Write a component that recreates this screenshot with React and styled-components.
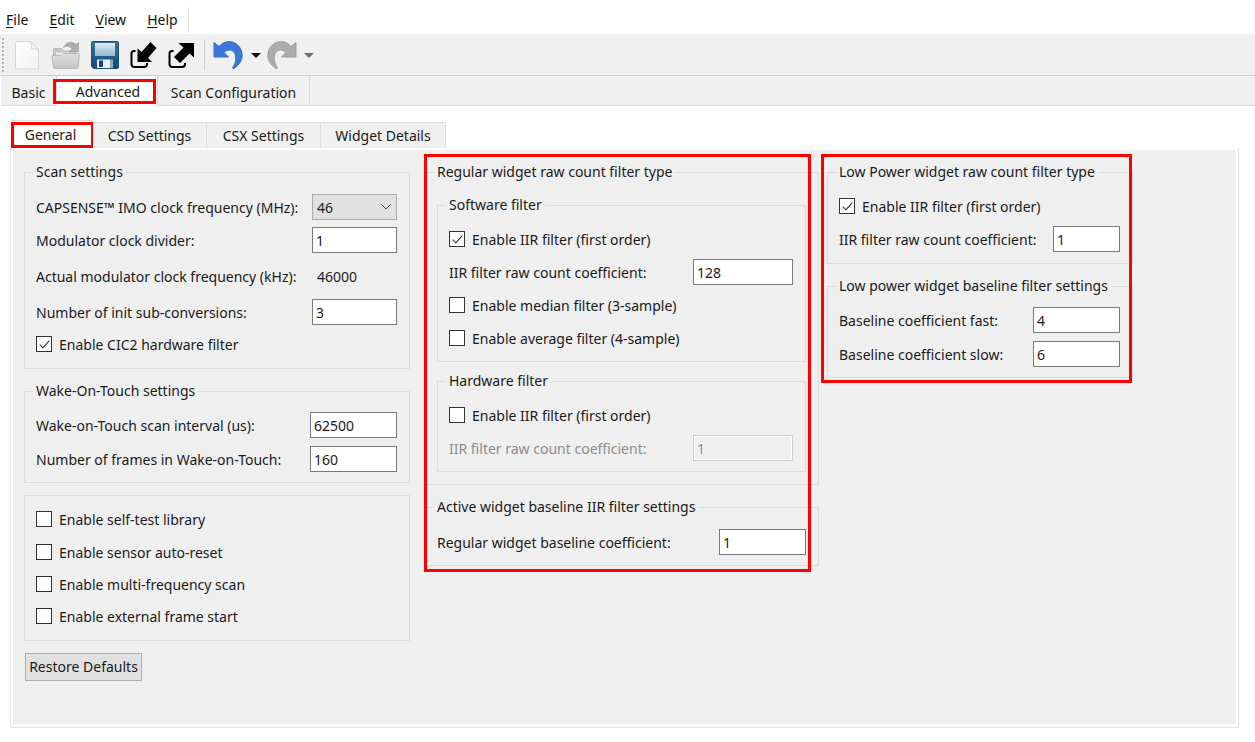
import React from "react";
import styled, { createGlobalStyle, css } from "styled-components";

const Global = createGlobalStyle`
  *, *::before, *::after { box-sizing: border-box; }
  body { margin: 0; background: #fff; }
  body, button, input, select {
    font-family: "Noto Sans", "Open Sans", sans-serif;
    font-size: 14px;
    line-height: 20px;
    color: #1a1a1a;
  }
`;

const Window = styled.div`
  min-height: 100vh;
  display: flex;
  flex-direction: column;
`;

const MenuBar = styled.nav`
  display: flex;
  align-items: center;
  align-self: flex-start;
  height: 26px;
  margin-top: 7px;
  padding-left: 6px;
  gap: 21px;
  padding-right: 10px;
  border-right: 1px solid #e8e8e8;
`;

const MenuItem = styled.button`
  border: 0;
  padding: 0;
  background: none;
  color: #111;
  u { text-underline-offset: 2px; }
`;

const ToolBar = styled.div`
  display: flex;
  align-items: center;
  height: 42px;
  margin-top: 1px;
  padding-left: 2px;
  background: #f0f0f0;
  border-bottom: 1px solid #cfcfcf;
`;

const Grip = styled.span`
  height: 34px;
  margin-right: 10px;
  border-left: 2px dotted #b4b4b4;
`;

const ToolButton = styled.button`
  display: flex;
  padding: 0;
  border: 0;
  background: none;
  margin-right: ${(p) => p.$gap || 8}px;
  svg { display: block; }
`;

const ToolSeparator = styled.span`
  height: 30px;
  margin-right: 8px;
  border-left: 1px solid #d0d0d0;
`;

const redFrame = css`
  content: "";
  position: absolute;
  border: 3px solid #fe0000;
  pointer-events: none;
`;

const MainTabs = styled.div`
  display: flex;
  height: 30px;
  margin-left: 1px;
  background: #f0f0f0;
  border-bottom: 1px solid #dcdcdc;
`;

const MainTab = styled.button`
  position: relative;
  width: ${(p) => p.$width}px;
  height: ${(p) => (p.$active ? 30 : 29)}px;
  padding: 4px 0 0;
  border: 0;
  border-right: 1px solid #dadada;
  background: ${(p) => (p.$active ? "#fff" : "transparent")};
  ${(p) =>
    p.$active &&
    css`
      padding: 2px 0 0 2px;
      &::after { ${redFrame} inset: 3px 1px 2px -4px; }
    `}
`;

const SubTabs = styled.div`
  display: flex;
  align-items: flex-end;
  height: 28px;
  margin: 14px 0 0 11px;
`;

const SubTab = styled.button`
  position: relative;
  width: ${(p) => p.$width}px;
  height: 26px;
  padding: 1px 0 0;
  border: solid #dedede;
  border-width: 1px 1px 0 0;
  background: #f0f0f0;
  ${(p) =>
    p.$active &&
    css`
      height: 28px;
      padding-right: 2px;
      background: #fff;
      &::after { ${redFrame} inset: 1px -2px 0 0; }
    `}
`;

const Panel = styled.div`
  flex: 1;
  display: flex;
  margin: 0 16px 14px 10px;
  padding: 2px 2px 3px;
  border: 1px solid #e2e2e2;
  border-top: 0;
`;

const Page = styled.form`
  flex: 1;
  display: flex;
  align-items: flex-start;
  padding: 12px 11px;
  background: #efefef;
`;

const Column = styled.div`
  position: relative;
  display: flex;
  flex-direction: column;
  align-items: stretch;
  gap: 12px;
  width: ${(p) => p.$width}px;
  margin-right: ${(p) => p.$gap || 0}px;
  ${(p) =>
    p.$frame &&
    css`
      &::after { ${redFrame} inset: ${p.$frame}; }
    `}
`;

const Group = styled.fieldset`
  min-width: 0;
  margin: 0;
  padding: ${(p) => p.$top || 7}px 12px ${(p) => p.$bottom || 6}px 11px;
  border: 1px solid #dcdcdc;
`;

const Stack = styled.div`
  display: flex;
  flex-direction: column;
  gap: 9px;
`;

const Legend = styled.legend`
  margin-left: -3px;
  padding: 0 3px;
`;

const Row = styled.div`
  display: flex;
  align-items: center;
  justify-content: space-between;
  height: ${(p) => p.$height || 33}px;
  color: ${(p) => (p.$muted ? "#8c8c8c" : "inherit")};
`;

const Label = styled.label`
  padding-top: 2px;
  white-space: nowrap;
`;

const TextBox = styled.input`
  width: ${(p) => p.$width}px;
  height: 26px;
  padding: 1px 3px 0;
  border: 1px solid #7a7a7a;
  border-radius: 0;
  background: #fff;
  &:disabled {
    border-color: #cccccc;
    background: #f0f0f0;
    box-shadow: inset 0 0 0 1px #fff;
    color: #8c8c8c;
  }
`;

const Output = styled.output`
  width: 85px;
  padding: 2px 5px 0;
`;

const SelectBox = styled.div`
  display: grid;
  align-items: center;
  width: 85px;
  > * { grid-area: 1 / 1; }
  svg { justify-self: end; margin-right: 6px; pointer-events: none; }
`;

const Select = styled.select`
  appearance: none;
  width: 100%;
  height: 26px;
  padding: 1px 4px 0;
  border: 1px solid #adadad;
  border-radius: 0;
  background: #e1e1e1;
`;

const CheckLabel = styled.label`
  display: flex;
  align-items: center;
  gap: 7px;
  white-space: nowrap;
  span { padding-top: 2px; }
`;

const CheckInput = styled.input`
  appearance: none;
  position: relative;
  width: 16px;
  height: 16px;
  margin: 0;
  border: 1px solid #333;
  background: #fff;
  &:checked::after {
    content: "";
    position: absolute;
    left: 5px;
    top: 1px;
    width: 5px;
    height: 10px;
    border: solid #333;
    border-width: 0 1px 1px 0;
    transform: rotate(42deg);
  }
`;

const RestoreButton = styled.button`
  align-self: flex-start;
  width: 117px;
  height: 28px;
  margin-left: 1px;
  padding: 0;
  border: 1px solid #adadad;
  background: #e1e1e1;
  white-space: nowrap;
`;

function Field({ id, label, value, width, height, disabled }) {
  return (
    <Row $height={height} $muted={disabled}>
      <Label htmlFor={id}>{label}</Label>
      <TextBox id={id} type="text" defaultValue={value} disabled={disabled} $width={width} />
    </Row>
  );
}

function Check({ label, checked, height }) {
  return (
    <Row $height={height}>
      <CheckLabel>
        <CheckInput type="checkbox" defaultChecked={checked} />
        <span>{label}</span>
      </CheckLabel>
    </Row>
  );
}

const NewIcon = () => (
  <svg width="26" height="30" viewBox="0 0 26 30">
    <defs>
      <linearGradient id="sheet" x1="0" y1="0" x2="1" y2="1">
        <stop offset="0" stopColor="#ffffff" />
        <stop offset="1" stopColor="#f1f1f1" />
      </linearGradient>
    </defs>
    <path d="M2 1.500h14.500l8 8V28q0 1-1 1h-21q-1 0-1-1V2.500q0-1 .5-1z" fill="url(#sheet)" stroke="#d6d6d6" />
    <path d="M16.500 1.500q2 4 1 7.500 4-.5 7 .500z" fill="#f6f6f6" stroke="#d6d6d6" />
  </svg>
);

const OpenIcon = () => (
  <svg width="30" height="30" viewBox="0 0 30 30">
    <defs>
      <linearGradient id="folder" x1="0" y1="0" x2="0" y2="1">
        <stop offset="0" stopColor="#dedede" />
        <stop offset="1" stopColor="#c4c4c4" />
      </linearGradient>
    </defs>
    <path d="M2.500 27V9.500q0-1 1-1h7l2 2.500h11q1 0 1 1V27z" fill="#c6c6c6" stroke="#b5b5b5" />
    <path d="M5 12.500h18V20H5z" fill="#ededed" />
    <path d="M1 16.500q0-1 1-1h8l2-2h15.500q1 0 1 1L27 27.500q0 1-1 1H3.500q-1 0-1-1z" fill="url(#folder)" stroke="#b9b9b9" />
    <path d="M12.500 7.500C15 2 21 .500 25 4.500l2.500-2V12H18l3-3c-2-3-5.500-3.500-8.500-1.500z" fill="#adadad" stroke="#a0a0a0" strokeWidth=".7" />
  </svg>
);

const SaveIcon = () => (
  <svg width="28" height="28" viewBox="0 0 28 28">
    <defs>
      <linearGradient id="disk" x1="0" y1="0" x2="0" y2="1">
        <stop offset="0" stopColor="#3f7594" />
        <stop offset=".6" stopColor="#1e5a8c" />
        <stop offset="1" stopColor="#174876" />
      </linearGradient>
      <linearGradient id="disklabel" x1="0" y1="0" x2="0" y2="1">
        <stop offset="0" stopColor="#dfeaf0" />
        <stop offset="1" stopColor="#8fb9cc" />
      </linearGradient>
    </defs>
    <path d="M1.500.500h25q1 0 1 1v25q0 1-1 1h-24l-2-2v-24q0-1 1-1z" fill="url(#disk)" stroke="#1d4f72" />
    <path d="M4 2h20v13H4z" fill="url(#disklabel)" />
    <path d="M6 18.500h13V27H6z" fill="#e8eef4" />
    <path d="M8 19.500h4V26H8z" fill="#1d3f86" />
    <path d="M19 18.500h3V27h-3z" fill="#8ca9c4" />
  </svg>
);

const ImportIcon = () => (
  <svg width="28" height="28" viewBox="0 0 28 28">
    <path d="M5.500 10H4q-2.500 0-2.500 2.500V23q0 3 3 3H14q3 0 3-3v-1" fill="none" stroke="#000" strokeWidth="2" />
    <path d="M7.500 7.500V21H22l-4-4L26.500 7l-6-6-9 10z" fill="#000" />
  </svg>
);

const ExportIcon = () => (
  <svg width="28" height="28" viewBox="0 0 28 28">
    <path d="M5.500 10H4q-2.500 0-2.500 2.500V23q0 3 3 3H14q3 0 3-3v-1" fill="none" stroke="#000" strokeWidth="2" />
    <path d="M10.500 2H26v14.500l-4.500-4-9.500 9.500-6-6 9.500-9.500z" fill="#000" />
  </svg>
);

const UndoShape = ({ fill, edge, flip }) => (
  <svg width="30" height="30" viewBox="0 0 30 30">
    <path
      transform={flip ? "translate(30 0) scale(-1 1)" : undefined}
      d="M1 2.500V17h14.500l-4.500-4.500c4.500-4 10-3 11.500 2.500 1 5-.5 9-3 13l1.500.5c6-4 9-9.500 8-15.500C27.500 5 20 0 13 2 10 3 8 4 6 6.500z"
      fill={fill}
      stroke={edge}
    />
  </svg>
);

const Caret = ({ fill }) => (
  <svg width="10" height="6" viewBox="0 0 10 6">
    <path d="M0 1h10L5 6z" fill={fill} />
  </svg>
);

const Chevron = () => (
  <svg width="10" height="6" viewBox="0 0 10 6">
    <path d="M.5.500 5 5 9.500.500" fill="none" stroke="#444" />
  </svg>
);

export default function App() {
  return (
    <Window>
      <Global />
      <MenuBar>
        <MenuItem><u>F</u>ile</MenuItem>
        <MenuItem><u>E</u>dit</MenuItem>
        <MenuItem><u>V</u>iew</MenuItem>
        <MenuItem><u>H</u>elp</MenuItem>
      </MenuBar>
      <ToolBar>
        <Grip />
        <ToolButton aria-label="New" $gap={11}><NewIcon /></ToolButton>
        <ToolButton aria-label="Open" $gap={10}><OpenIcon /></ToolButton>
        <ToolButton aria-label="Save" $gap={11}><SaveIcon /></ToolButton>
        <ToolButton aria-label="Import" $gap={10}><ImportIcon /></ToolButton>
        <ToolButton aria-label="Export"><ExportIcon /></ToolButton>
        <ToolSeparator />
        <ToolButton aria-label="Undo"><UndoShape fill="#3a78dc" edge="#3a6cc0" /></ToolButton>
        <ToolButton aria-label="Undo history" $gap={6}><Caret fill="#111" /></ToolButton>
        <ToolButton aria-label="Redo" $gap={7}><UndoShape flip fill="#acacac" edge="#9e9e9e" /></ToolButton>
        <ToolButton aria-label="Redo history"><Caret fill="#6e6e6e" /></ToolButton>
      </ToolBar>
      <MainTabs>
        <MainTab $width={56}>Basic</MainTab>
        <MainTab $width={101} $active>Advanced</MainTab>
        <MainTab $width={152}>Scan Configuration</MainTab>
      </MainTabs>
      <SubTabs>
        <SubTab $width={82} $active>General</SubTab>
        <SubTab $width={114}>CSD Settings</SubTab>
        <SubTab $width={114}>CSX Settings</SubTab>
        <SubTab $width={125}>Widget Details</SubTab>
      </SubTabs>
      <Panel>
        <Page>
          <Column $width={386} $gap={15}>
            <Group $top={8} $bottom={8}>
              <Legend>Scan settings</Legend>
              <Row $height={34}>
                <Label htmlFor="imo">CAPSENSE™ IMO clock frequency (MHz):</Label>
                <SelectBox>
                  <Select id="imo" defaultValue="46">
                    <option>46</option>
                  </Select>
                  <Chevron />
                </SelectBox>
              </Row>
              <Field id="divider" label="Modulator clock divider:" value="1" width={85} height={32} />
              <Row $height={40}>
                <Label htmlFor="actual">Actual modulator clock frequency (kHz):</Label>
                <Output id="actual">46000</Output>
              </Row>
              <Field id="init" label="Number of init sub-conversions:" value="3" width={85} height={32} />
              <Check label="Enable CIC2 hardware filter" checked height={32} />
            </Group>
            <Group>
              <Legend>Wake-On-Touch settings</Legend>
              <Field id="interval" label="Wake-on-Touch scan interval (us):" value="62500" width={87} height={34} />
              <Field id="frames" label="Number of frames in Wake-on-Touch:" value="160" width={87} height={34} />
            </Group>
            <Group $bottom={8}>
              <Check label="Enable self-test library" height={32} />
              <Check label="Enable sensor auto-reset" />
              <Check label="Enable multi-frequency scan" height={32} />
              <Check label="Enable external frame start" height={32} />
            </Group>
            <RestoreButton type="button">Restore Defaults</RestoreButton>
          </Column>
          <Column $width={394} $gap={8} $frame="-8px 8px -6px -1px">
            <Group $top={13} $bottom={12}>
              <Legend>Regular widget raw count filter type</Legend>
              <Stack>
                <Group $bottom={7}>
                  <Legend>Software filter</Legend>
                  <Check label="Enable IIR filter (first order)" checked />
                  <Field id="sw-iir" label="IIR filter raw count coefficient:" value="128" width={100} />
                  <Check label="Enable median filter (3-sample)" />
                  <Check label="Enable average filter (4-sample)" />
                </Group>
                <Group $bottom={7}>
                  <Legend>Hardware filter</Legend>
                  <Check label="Enable IIR filter (first order)" />
                  <Field id="hw-iir" label="IIR filter raw count coefficient:" value="1" width={100} disabled />
                </Group>
              </Stack>
            </Group>
            <Group $top={8}>
              <Legend>Active widget baseline IIR filter settings</Legend>
              <Field id="regular" label="Regular widget baseline coefficient:" value="1" width={87} height={34} />
            </Group>
          </Column>
          <Column $width={306} $frame="-8px 1px -5px -6px">
            <Group $bottom={8}>
              <Legend>Low Power widget raw count filter type</Legend>
              <Check label="Enable IIR filter (first order)" checked />
              <Field id="lp-iir" label="IIR filter raw count coefficient:" value="1" width={67} />
            </Group>
            <Group>
              <Legend>Low power widget baseline filter settings</Legend>
              <Field id="fast" label="Baseline coefficient fast:" value="4" width={87} height={34} />
              <Field id="slow" label="Baseline coefficient slow:" value="6" width={87} height={34} />
            </Group>
          </Column>
        </Page>
      </Panel>
    </Window>
  );
}
